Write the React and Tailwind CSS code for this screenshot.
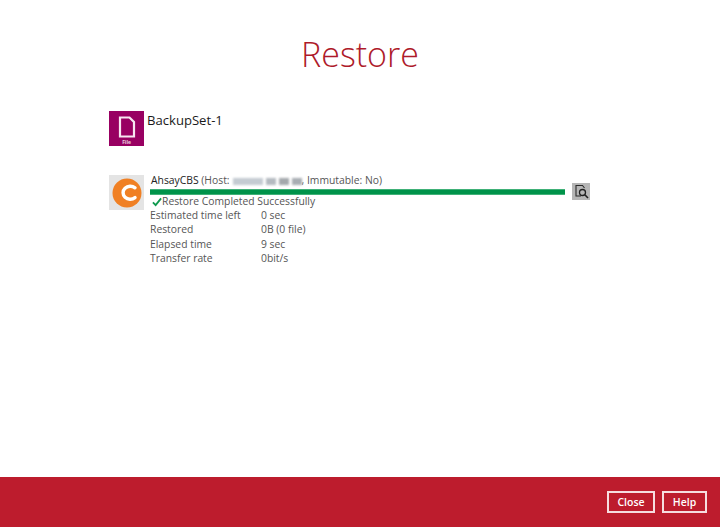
const stats = [
  ["Estimated time left", "0 sec"],
  ["Restored", "0B (0 file)"],
  ["Elapsed time", "9 sec"],
  ["Transfer rate", "0bit/s"],
];

function FileTile() {
  return (
    <div className="w-[35px] h-[35px] bg-[#980062] flex flex-col items-center shrink-0">
      <svg width="18" height="22" viewBox="0 0 18 22" className="mt-[5px]">
        <path d="M2 1.500h9.500l4.500 4.500v14.500h-14z" fill="#980062" stroke="#f7e6f1" strokeWidth="2.200" />
      </svg>
      <span className="text-[5px] leading-[6px] font-bold text-white/80 mt-[1px]">File</span>
    </div>
  );
}

function CbsTile() {
  return (
    <div className="w-[35px] h-[35px] bg-[#e4e4e4] flex items-center justify-center shrink-0">
      <svg width="30" height="30" viewBox="0 0 30 30">
        <circle cx="15" cy="15" r="14.500" fill="#f08024" />
        <path d="M23 9.800A7.200 6.500 0 1 0 23 19.600" fill="none" stroke="#fff" strokeWidth="3.400" strokeLinecap="round" />
      </svg>
    </div>
  );
}

function HostBlur() {
  return (
    <span className="inline-flex items-center gap-[3px] ml-[3px] h-[10px] blur-[1px] align-middle">
      <span className="w-[30px] h-[7px] bg-[#c4cbd2]" />
      <span className="w-[10px] h-[7px] bg-[#b4bac0]" />
      <span className="w-[10px] h-[7px] bg-[#a4a8ac]" />
      <span className="w-[10px] h-[7px] bg-[#a8adb3]" />
    </span>
  );
}

export default function App() {
  return (
    <div className="h-[527px] w-[720px] flex flex-col bg-white font-['Open_Sans',sans-serif]">
      <div className="flex-1 flex flex-col">
        <h1 className="text-center text-[34px] leading-[46px] font-light text-[#ae1a2a] mt-[31px]">Restore</h1>

        <div className="flex items-start gap-[3px] ml-[109px] mt-[34px]">
          <FileTile />
          <div className="text-[13.100px] leading-[20px] text-[#1a1a1a] -mt-[1px]">BackupSet-1</div>
        </div>

        <div className="flex items-start ml-[109px] mt-[29px]">
          <CbsTile />
          <div className="ml-[6px] w-[415px] -mt-[2px]">
            <div className="text-[10.350px] leading-[14px] text-[#555] whitespace-nowrap pl-[1px]">
              <span className="text-[#222]">AhsayCBS</span> (Host:
              <HostBlur />, Immutable: No)
            </div>
            <div className="h-[6px] bg-[#00934a] mt-[2px] border-t border-b border-[#7fd0a5]/50" />
            <div className="flex items-center text-[10.350px] leading-[14px] text-[#555] -mt-[2px] h-[15px]">
              <svg width="10" height="10" viewBox="0 0 11 10" className="ml-[2px] mt-[2px]">
                <path d="M1 5.500l3 3 6-7.500" fill="none" stroke="#0f9a4f" strokeWidth="2" />
              </svg>
              Restore Completed Successfully
            </div>
            <div className="grid grid-cols-[111px_1fr] text-[10.350px] leading-[14.300px] text-[#555]">
              {stats.map(([label, value]) => (
                <div key={label} className="contents">
                  <div>{label}</div>
                  <div>{value}</div>
                </div>
              ))}
            </div>
          </div>
          <div className="w-[18px] h-[17px] bg-[#b5b5b5] ml-[7px] mt-[8px] flex items-center justify-center shrink-0">
            <svg width="15" height="15" viewBox="0 0 15 15">
              <path d="M7 12H2V1.500h6.500L10.500 4" fill="none" stroke="#2b2b2b" strokeWidth="1.100" />
              <circle cx="8.500" cy="8.500" r="3" fill="none" stroke="#1f1f1f" strokeWidth="1.300" />
              <path d="M10.800 10.800L14 14" stroke="#1f1f1f" strokeWidth="1.600" />
            </svg>
          </div>
        </div>
      </div>

      <div className="h-[50px] bg-[#bd1c2d] flex items-center justify-end gap-[7px] pr-[13px]">
        <button className="w-[48px] h-[22px] border-2 border-[#f6dde0] text-white text-[10.500px] font-semibold leading-none">Close</button>
        <button className="w-[45px] h-[22px] border-2 border-[#f6dde0] text-white text-[10.500px] font-semibold leading-none">Help</button>
      </div>
    </div>
  );
}
